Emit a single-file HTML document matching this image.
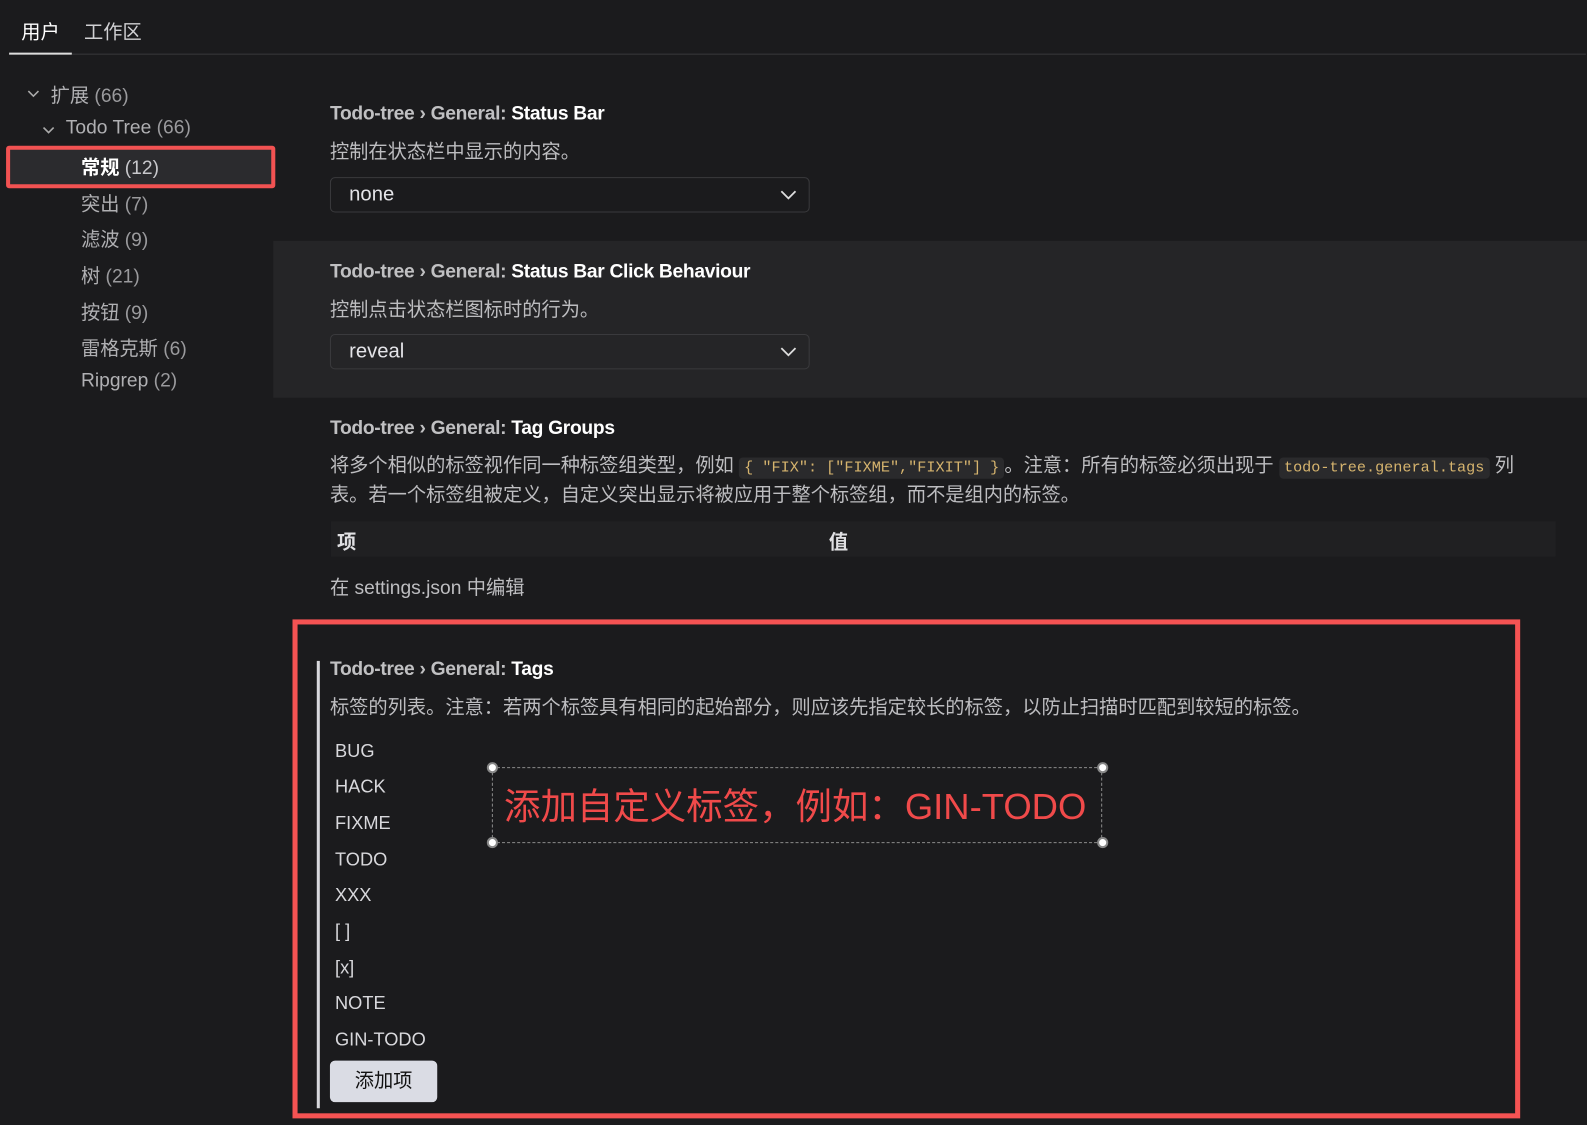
<!DOCTYPE html>
<html><head><meta charset="utf-8"><style>
*{margin:0;padding:0;box-sizing:border-box}
body{width:1587px;height:1125px;background:#1b1b1d;overflow:hidden}
#w{position:absolute;left:0;top:0;width:1568px;height:1112px;transform:scale(1.0121);transform-origin:0 0;color:#c5c5c8;font-family:"Liberation Sans","Noto Sans CJK SC",sans-serif;font-size:19px}
.a{position:absolute;white-space:nowrap}
.t{font-size:19px;font-weight:bold;color:#c0c0c2;letter-spacing:-0.3px}
.t b{color:#fff}
.d{color:#bdbdc0;font-size:19px}
.sel{position:absolute;left:326px;width:474px;height:35px;border:1px solid #3a3a3d;border-radius:5px;background:#1b1b1d}
.sel span{position:absolute;left:18px;top:5px;font-size:20px;color:#e4e4e8}
.sel svg{position:absolute;right:11px;top:11px}
code{font-family:"Liberation Mono",monospace;font-size:15px;color:#d6b46e;background:#2a2a2c;border-radius:4px;padding:2px 5px}
.nav{color:#b0b0b3;font-size:19px}
.nav .c{color:#9a9a9d}
.tag{position:absolute;left:331px;font-size:18px;color:#d8d8dc}
</style></head><body><div id="w">
<div class="a" style="left:21px;top:17px;font-size:19px;color:#fff">用户</div>
<div class="a" style="left:83px;top:17px;font-size:19px;color:#d0d0d3">工作区</div>
<div class="a" style="left:9px;top:52px;width:62px;height:2px;background:#ddd"></div>
<div class="a" style="left:71px;top:53px;width:1496px;height:1px;background:#38383b"></div>

<svg class="a" style="left:26px;top:88px" width="14" height="10"><path d="M2 2l5 5 5-5" stroke="#aaa" stroke-width="1.6" fill="none"/></svg>
<div class="a nav" style="left:50px;top:80px">扩展 <span class="c">(66)</span></div>
<svg class="a" style="left:41px;top:124px" width="14" height="10"><path d="M2 2l5 5 5-5" stroke="#aaa" stroke-width="1.6" fill="none"/></svg>
<div class="a nav" style="left:65px;top:116px">Todo Tree <span class="c">(66)</span></div>
<div class="a" style="left:6px;top:144px;width:266px;height:42px;border:4px solid #f25252;border-radius:3px;background:#2b2b2e"></div>
<div class="a nav" style="left:80px;top:151px;color:#fff;font-weight:bold">常规 <span style="color:#c8c8cc;font-weight:normal">(12)</span></div>
<div class="a nav" style="left:80px;top:187px">突出 <span class="c">(7)</span></div>
<div class="a nav" style="left:80px;top:222px">滤波 <span class="c">(9)</span></div>
<div class="a nav" style="left:80px;top:258px">树 <span class="c">(21)</span></div>
<div class="a nav" style="left:80px;top:294px">按钮 <span class="c">(9)</span></div>
<div class="a nav" style="left:80px;top:330px">雷格克斯 <span class="c">(6)</span></div>
<div class="a nav" style="left:80px;top:366px">Ripgrep <span class="c">(2)</span></div>

<div class="a t" style="left:326px;top:102px">Todo-tree › General: <b>Status Bar</b></div>
<div class="a d" style="left:326px;top:135px">控制在状态栏中显示的内容。</div>
<div class="sel" style="top:175px"><span>none</span><svg width="18" height="12"><path d="M2 2l7 7 7-7" stroke="#ddd" stroke-width="1.8" fill="none"/></svg></div>

<div class="a" style="left:270px;top:238px;width:1317px;height:155px;background:#252527"></div>
<div class="a t" style="left:326px;top:258px">Todo-tree › General: <b>Status Bar Click Behaviour</b></div>
<div class="a d" style="left:326px;top:291px">控制点击状态栏图标时的行为。</div>
<div class="sel" style="top:330px;background:#252527"><span>reveal</span><svg width="18" height="12"><path d="M2 2l7 7 7-7" stroke="#ddd" stroke-width="1.8" fill="none"/></svg></div>

<div class="a t" style="left:326px;top:413px">Todo-tree › General: <b>Tag Groups</b></div>
<div class="a d" style="left:326px;top:447px;line-height:27px">将多个相似的标签视作同一种标签组类型，例如 <code>{ "FIX": ["FIXME","FIXIT"] }</code>。注意：所有的标签必须出现于 <code>todo-tree.general.tags</code> 列<br>表。若一个标签组被定义，自定义突出显示将被应用于整个标签组，而不是组内的标签。</div>
<div class="a" style="left:327px;top:515px;width:1210px;height:35px;background:#202022"></div>
<div class="a" style="left:333px;top:521px;font-weight:bold;color:#e0e0e3">项</div>
<div class="a" style="left:819px;top:521px;font-weight:bold;color:#e0e0e3">值</div>
<div class="a d" style="left:326px;top:566px">在 settings.json 中编辑</div>

<div class="a" style="left:289px;top:612px;width:1213px;height:493px;border:5px solid #f55353"></div>
<div class="a" style="left:313px;top:653px;width:3px;height:442px;background:#d8d8dc"></div>
<div class="a t" style="left:326px;top:651px">Todo-tree › General: <b>Tags</b></div>
<div class="a d" style="left:326px;top:684px">标签的列表。注意：若两个标签具有相同的起始部分，则应该先指定较长的标签，以防止扫描时匹配到较短的标签。</div>
<div class="tag" style="top:732px">BUG</div>
<div class="tag" style="top:767px">HACK</div>
<div class="tag" style="top:803px">FIXME</div>
<div class="tag" style="top:839px">TODO</div>
<div class="tag" style="top:874px">XXX</div>
<div class="tag" style="top:910px">[ ]</div>
<div class="tag" style="top:946px">[x]</div>
<div class="tag" style="top:981px">NOTE</div>
<div class="tag" style="top:1017px">GIN-TODO</div>
<div class="a" style="left:326px;top:1048px;width:106px;height:41px;background:#dadce4;border-radius:5px;color:#111;font-size:19px;text-align:center;line-height:41px">添加项</div>

<div class="a" style="left:486px;top:758px;width:603px;height:75px;border:1.5px dashed #8a8a8a"></div>
<div class="a" style="left:481px;top:753px;width:11px;height:11px;border-radius:50%;background:#fff;border:2px solid #888"></div>
<div class="a" style="left:1084px;top:753px;width:11px;height:11px;border-radius:50%;background:#fff;border:2px solid #888"></div>
<div class="a" style="left:481px;top:827px;width:11px;height:11px;border-radius:50%;background:#fff;border:2px solid #888"></div>
<div class="a" style="left:1084px;top:827px;width:11px;height:11px;border-radius:50%;background:#fff;border:2px solid #888"></div>
<div class="a" style="left:498px;top:772px;font-size:36px;color:#f04a4a;line-height:50px">添加自定义标签，例如：GIN-TODO</div>
</div></body></html>
